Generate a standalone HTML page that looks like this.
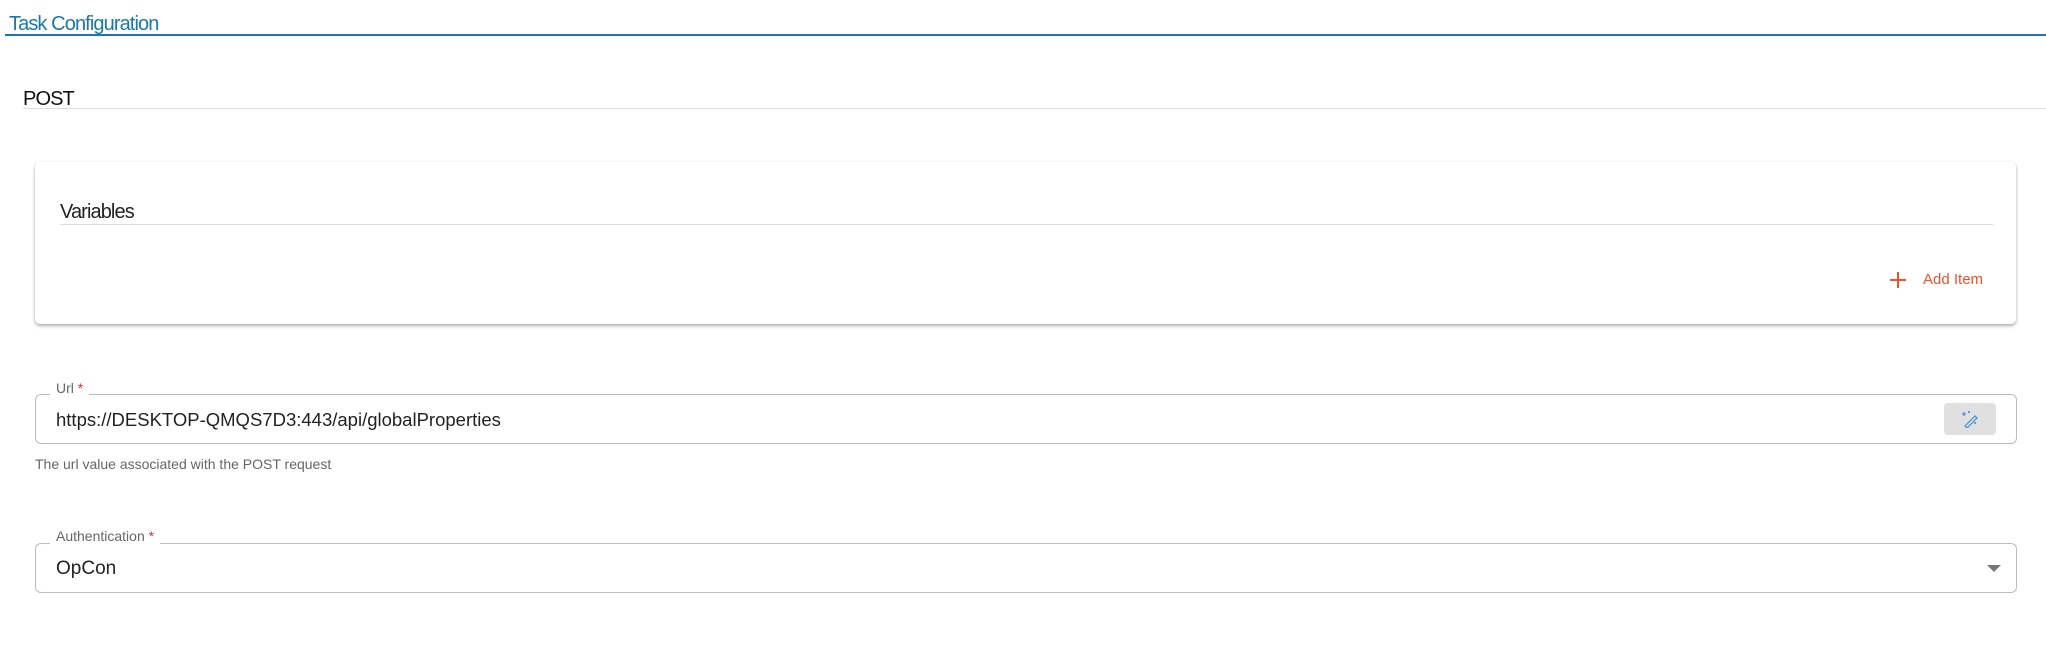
<!DOCTYPE html>
<html><head><meta charset="utf-8"><style>
*{margin:0;padding:0;box-sizing:border-box}
body{width:2046px;height:655px;background:#fff;position:relative;overflow:hidden;font-family:"Liberation Sans",sans-serif}
.a{position:absolute;white-space:nowrap}
.cond{letter-spacing:-0.9px}
</style></head><body>
<div class="a cond" style="left:9px;top:13px;font-size:20px;color:#1a78ad">Task Configuration</div>
<div class="a" style="left:5px;top:34px;width:2041px;height:2px;background:#1a78ad"></div>

<div class="a cond" style="left:23px;top:88px;font-size:20px;color:#111">POST</div>
<div class="a" style="left:23px;top:108px;width:2023px;height:1px;background:#ddd"></div>

<div class="a" style="left:35px;top:162px;width:1981px;height:162px;border-radius:5px;background:#fff;box-shadow:0 2px 3px rgba(0,0,0,0.3),0 0 3px rgba(0,0,0,0.06)"></div>
<div class="a cond" style="left:60px;top:201px;font-size:20px;color:#222">Variables</div>
<div class="a" style="left:60px;top:224px;width:1933px;height:1px;background:#ddd"></div>
<svg class="a" style="left:1889px;top:271px" width="18" height="18" viewBox="0 0 18 18"><path d="M9 1V17M1 9H17" stroke="#f0502a" stroke-width="2"/></svg>
<div class="a" style="left:1923px;top:271px;font-size:15px;color:#f0502a">Add Item</div>

<div class="a" style="left:35px;top:394px;width:1982px;height:50px;border:1px solid #bbb;border-radius:6px"></div>
<div class="a" style="left:50px;top:380px;padding:0 6px;background:#fff;font-size:14px;color:#666">Url <span style="color:#d33">*</span></div>
<div class="a" style="left:56px;top:409px;font-size:18.5px;color:#222">https://DESKTOP-QMQS7D3:443/api/globalProperties</div>
<div class="a" style="left:1944px;top:403px;width:52px;height:32px;background:#e0e0e0;border-radius:4px"></div>
<svg class="a" style="left:1961px;top:410px" width="18" height="18" viewBox="0 0 18 18" fill="none" stroke="#3b8ee8" stroke-width="1.2"><path d="M4 16L14 6L16 8L6 18Z"/><path d="M3 2V6M1 4H5M8 1V3M7 2H9M14 12V14M13 13H15"/></svg>
<div class="a" style="left:35px;top:456px;font-size:14px;color:#666">The url value associated with the POST request</div>

<div class="a" style="left:35px;top:543px;width:1982px;height:50px;border:1px solid #bbb;border-radius:6px"></div>
<div class="a" style="left:50px;top:528px;padding:0 6px;background:#fff;font-size:14px;color:#666">Authentication <span style="color:#d33">*</span></div>
<div class="a" style="left:56px;top:558px;font-size:19px;color:#222">OpCon</div>
<svg class="a" style="left:1987px;top:564px" width="14" height="8" viewBox="0 0 14 8"><path d="M0 1H14L7 8Z" fill="#777"/></svg>
</body></html>
